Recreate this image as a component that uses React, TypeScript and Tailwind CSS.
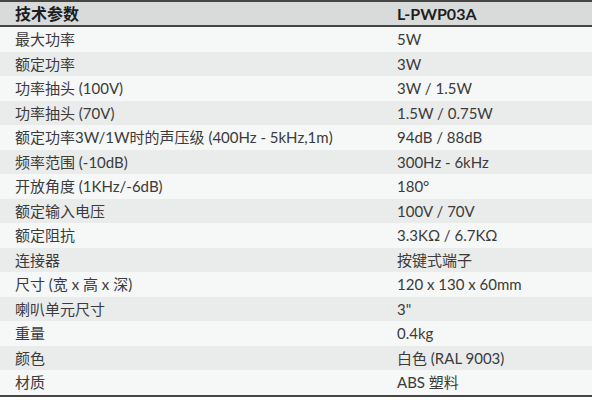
const rows: [string, string][] = [
  ["最大功率", "5W"],
  ["额定功率", "3W"],
  ["功率抽头 (100V)", "3W / 1.5W"],
  ["功率抽头 (70V)", "1.5W / 0.75W"],
  ["额定功率3W/1W时的声压级 (400Hz - 5kHz,1m)", "94dB / 88dB"],
  ["频率范围 (-10dB)", "300Hz - 6kHz"],
  ["开放角度 (1KHz/-6dB)", "180°"],
  ["额定输入电压", "100V / 70V"],
  ["额定阻抗", "3.3KΩ / 6.7KΩ"],
  ["连接器", "按键式端子"],
  ["尺寸 (宽 x 高 x 深)", "120 x 130 x 60mm"],
  ["喇叭单元尺寸", "3\""],
  ["重量", "0.4kg"],
  ["颜色", "白色 (RAL 9003)"],
  ["材质", "ABS 塑料"],
];

export default function App() {
  return (
    <div
      className="w-[592px] h-[400px] bg-white text-[#3b3b3b]"
      style={{ fontFamily: '"Lato", "Noto Sans CJK SC", sans-serif' }}
    >
      <div className="border-t-2 border-b-2 border-[#474444]">
        {/* header */}
        <div className="grid grid-cols-[397px_1fr] h-[25px] items-center bg-[#d9dada] border-b-2 border-[#474444] text-[16px] font-bold text-[#1e1e1e]">
          <div className="pl-[15px]">技术参数</div>
          <div>L-PWP03A</div>
        </div>
        {rows.map(([label, value], i) => (
          <div
            key={label}
            className={`grid grid-cols-[397px_1fr] h-[24.5px] items-center text-[15px] ${
              i % 2 === 0 ? "bg-[#f6f7f7]" : "bg-[#eaebeb]"
            }`}
          >
            <div className="pl-[15px] whitespace-nowrap">{label}</div>
            <div className="whitespace-nowrap">{value}</div>
          </div>
        ))}
      </div>
    </div>
  );
}
